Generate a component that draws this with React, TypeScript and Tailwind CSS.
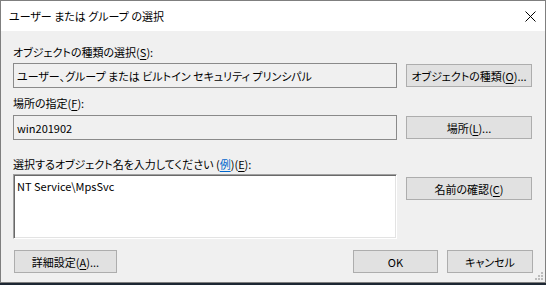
import React from "react";

const font = "font-['Noto_Sans_CJK_JP','Noto_Sans',sans-serif] [font-feature-settings:'palt']";

function Btn({ w, children, className = "" }: { w: string; children: React.ReactNode; className?: string }) {
  return (
    <div
      className={`${w} h-[23px] shrink-0 bg-[#e1e1e1] border border-[#adadad] flex items-center justify-center whitespace-nowrap text-[11px] leading-[16px] text-black ${className}`}
    >
      {children}
    </div>
  );
}

function U({ children }: { children: React.ReactNode }) {
  return <span className="underline underline-offset-[2px] decoration-1">{children}</span>;
}

export default function App() {
  return (
    <div className={`w-[546px] h-[285px] bg-[#1d2733] ${font}`}>
      <div className="relative w-[546px] h-[283px] border border-[#7f7f7f] bg-[#f0f0f0] flex flex-col">
        {/* Title bar */}
        <div className="h-[30px] bg-white flex items-center justify-between pl-[8px] pr-[9px] shrink-0">
          <span className="text-[11px] leading-[16px] text-black">ユーザー または グループ の選択</span>
          <svg width="11" height="11" viewBox="0 0 11 11">
            <path d="M0.5 0.5 L10.5 10.5 M10.5 0.5 L0.5 10.5" stroke="#000" strokeWidth="1" />
          </svg>
        </div>

        {/* Body */}
        <div className="flex flex-col pl-[12px] pr-[12px] pt-[13px] text-[11px] leading-[16px] text-black">
          <div className="h-[16px]">
            オブジェクトの種類の選択(<U>S</U>):
          </div>
          <div className="mt-[3px] flex items-center gap-[9px]">
            <div className="w-[384px] h-[25px] border border-[#8a8a8a] bg-[#f0f0f0] flex items-center pl-[3px] whitespace-nowrap overflow-hidden">
              ユーザー、グループ または ビルトイン セキュリティ プリンシパル
            </div>
            <Btn w="w-[126px]">
              オブジェクトの種類(<U>O</U>)...
            </Btn>
          </div>

          <div className="mt-[7px] h-[16px]">
            場所の指定(<U>F</U>):
          </div>
          <div className="mt-[4px] flex items-center gap-[9px]">
            <div className="w-[384px] h-[25px] border border-[#8a8a8a] bg-[#f0f0f0] flex items-center pl-[3px]">
              win201902
            </div>
            <Btn w="w-[126px]">
              場所(<U>L</U>)...
            </Btn>
          </div>

          <div className="mt-[16px] h-[16px]">
            選択するオブジェクト名を入力してください (
            <span className="text-[#0066cc] underline underline-offset-[2px] decoration-1">例</span>)(<U>E</U>):
          </div>
          <div className="mt-[2px] flex items-start gap-[9px]">
            <div className="w-[384px] h-[65px] bg-white border border-t-[#a0a0a0] border-l-[#a0a0a0] border-b-[#ffffff] border-r-[#ffffff] shadow-[inset_1px_1px_0_#696969,inset_-1px_-1px_0_#e3e3e3] pl-[3px] pt-[3px]">
              NT Service\MpsSvc
            </div>
            <Btn w="w-[126px]" className="mt-[3px]">
              名前の確認(<U>C</U>)
            </Btn>
          </div>

          <div className="mt-[11px] flex items-center">
            <Btn w="w-[103px]" className="ml-[1px]">
              詳細設定(<U>A</U>)...
            </Btn>
            <div className="flex-1" />
            <Btn w="w-[85px]">OK</Btn>
            <Btn w="w-[86px]" className="ml-[9px]">
              キャンセル
            </Btn>
          </div>
        </div>

        {/* Resize grip */}
        <svg width="8" height="8" viewBox="0 0 8 8" className="absolute right-[2px] bottom-[2px]">
          <rect x="6" y="0" width="2" height="2" fill="#bcbcbc" />
          <rect x="3" y="3" width="2" height="2" fill="#bcbcbc" />
          <rect x="6" y="3" width="2" height="2" fill="#bcbcbc" />
          <rect x="0" y="6" width="2" height="2" fill="#bcbcbc" />
          <rect x="3" y="6" width="2" height="2" fill="#bcbcbc" />
          <rect x="6" y="6" width="2" height="2" fill="#bcbcbc" />
        </svg>
      </div>
    </div>
  );
}
